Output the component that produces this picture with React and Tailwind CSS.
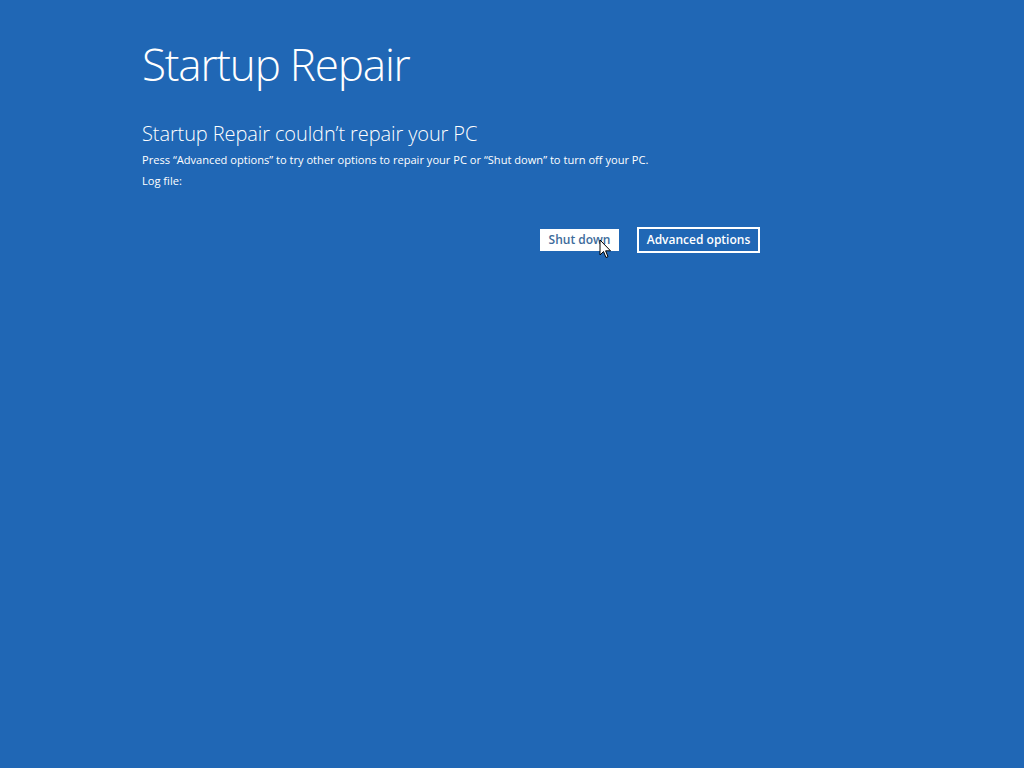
export default function App() {
  return (
    <div className="w-[1024px] h-[768px] bg-[#2067b5] text-white overflow-hidden" style={{ fontFamily: '"Open Sans", "Noto Sans", sans-serif' }}>
      <div className="pl-[142px] pt-[34px]">
        <h1 className="text-[44px] font-light leading-[60px] tracking-[-1.2px]">Startup Repair</h1>
        <h2 className="mt-[26px] text-[20px] font-light leading-[28px] tracking-[-0.1px]">Startup Repair couldn’t repair your PC</h2>
        <p className="text-[11.1px] leading-[16px] mt-[4px]">Press “Advanced options” to try other options to repair your PC or “Shut down” to turn off your PC.</p>
        <p className="text-[11.1px] leading-[16px] mt-[5px]">Log file:</p>
        <div className="flex gap-[18px] mt-[38px] ml-[398px] items-center">
          <div className="relative">
            <button className="w-[79px] h-[22px] bg-white text-[#3d6b9b] text-[12px] font-semibold flex items-center justify-center">Shut down</button>
            <svg className="absolute left-[59px] top-[10px]" width="13" height="21" viewBox="0 0 13 21">
              <path d="M1 1 L1 16 L4.5 12.5 L7 18.5 L9 17.7 L6.6 11.8 L11.5 11.8 Z" fill="#fff" stroke="#000" strokeWidth="1" strokeLinejoin="miter" />
            </svg>
          </div>
          <button className="w-[123px] h-[26px] border-2 border-white text-white text-[12px] font-semibold flex items-center justify-center">Advanced options</button>
        </div>
      </div>
    </div>
  );
}
